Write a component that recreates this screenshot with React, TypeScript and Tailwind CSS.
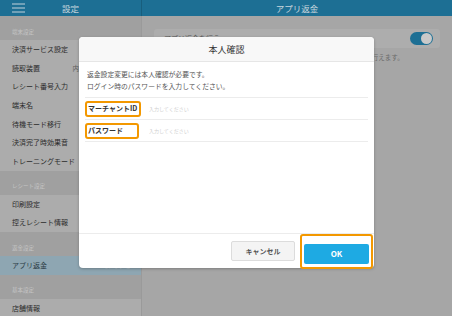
import { useState } from "react";

type Row = { label: string; value?: string; active?: boolean };
type Section = { title: string; rows: Row[] };

const sections: Section[] = [
  {
    title: "端末設定",
    rows: [
      { label: "決済サービス設定" },
      { label: "読取装置", value: "内蔵カードリーダー" },
      { label: "レシート番号入力" },
      { label: "端末名" },
      { label: "待機モード移行" },
      { label: "決済完了時効果音" },
      { label: "トレーニングモード" },
    ],
  },
  {
    title: "レシート設定",
    rows: [{ label: "印刷設定" }, { label: "控えレシート情報" }],
  },
  {
    title: "返金設定",
    rows: [{ label: "アプリ返金", value: "許可する", active: true }],
  },
  {
    title: "基本設定",
    rows: [{ label: "店舗情報" }],
  },
];

function Sidebar() {
  return (
    <div className="w-[142px] shrink-0 border-r border-[#9a9a9a] bg-[#acacac]">
      {sections.map((s) => (
        <div key={s.title}>
          <div className="h-[24px] flex items-end pl-[12px] pb-[5px] bg-[#a0a0a0] text-[5.5px] leading-none text-[#c4c4c4]">
            {s.title}
          </div>
          {s.rows.map((r) => (
            <div
              key={r.label}
              className={
                "h-[18.7px] flex items-center pl-[12px] pr-[10px] text-[7px] leading-none " +
                (r.active ? "bg-[#8ea6b2] text-[#2a3a42]" : "text-[#2b2b2b]")
              }
            >
              <span>{r.label}</span>
              {r.value && (
                <span
                  className={
                    "ml-auto text-[6.5px] " +
                    (r.active ? "text-[#aab9c0]" : "text-[#5c5c5c]")
                  }
                >
                  {r.value}
                </span>
              )}
            </div>
          ))}
        </div>
      ))}
    </div>
  );
}

function Dialog() {
  const [merchant, setMerchant] = useState("");
  const [password, setPassword] = useState("");

  return (
    <div className="absolute left-[79px] top-[37px] w-[295px] h-[231px] bg-white rounded-[4px] shadow-[0_1px_3px_rgba(0,0,0,0.25)] flex flex-col overflow-visible">
      <div className="h-[25px] shrink-0 flex items-center justify-center rounded-t-[4px] bg-[#f8f8f8] border-b border-[#e6e6e6] text-[9px] text-[#333] leading-none">
        本人確認
      </div>
      <div className="px-[8px] pt-[6px] text-[6.8px] leading-[12px] text-[#555]">
        <p>返金設定変更には本人確認が必要です。</p>
        <p>ログイン時のパスワードを入力してください。</p>
      </div>
      <div className="mx-[6px] mt-[5px] border-t border-[#ececec]">
        <div className="h-[22px] flex items-center border-b border-[#ececec]">
          <div className="w-[56px] h-[16px] flex items-center pl-[1px] border-2 border-[#f39800] rounded-[3px] text-[7px] font-bold text-[#333] leading-none whitespace-nowrap">
            マーチャントID
          </div>
          <input
            value={merchant}
            onChange={(e) => setMerchant(e.target.value)}
            placeholder="入力してください"
            className="ml-[8px] flex-1 bg-transparent outline-none text-[5px] text-[#333] placeholder:text-[#cfcfcf]"
          />
        </div>
        <div className="h-[22px] flex items-center border-b border-[#ececec]">
          <div className="w-[54px] h-[16px] flex items-center pl-[1px] border-2 border-[#f39800] rounded-[3px] text-[7px] font-bold text-[#333] leading-none whitespace-nowrap">
            パスワード
          </div>
          <input
            type="password"
            value={password}
            onChange={(e) => setPassword(e.target.value)}
            placeholder="入力してください"
            className="ml-[10px] flex-1 bg-transparent outline-none text-[5px] text-[#333] placeholder:text-[#cfcfcf]"
          />
        </div>
      </div>
      <div className="flex-1" />
      <div className="h-[35px] shrink-0 border-t border-[#ececec] flex items-center justify-end pr-[1px] gap-[5px]">
        <button className="w-[64px] h-[20px] rounded-[2px] bg-[#f4f4f4] border border-[#dcdcdc] text-[7px] font-bold text-[#555] leading-none">
          キャンセル
        </button>
        <div className="border-2 border-[#f39800] rounded-[3px] p-[2px] pb-[3px]">
          <button className="w-[65px] h-[20px] rounded-[2px] bg-[#1eaae3] text-[8px] font-bold text-white leading-none">
            OK
          </button>
        </div>
      </div>
    </div>
  );
}

export default function App() {
  return (
    <div className="relative w-[452px] h-[316px] overflow-hidden bg-[#a6a6a6] font-['Noto_Sans_CJK_JP','Liberation_Sans',sans-serif]">
      <div className="h-[16px] flex bg-[#1d6f94]">
        <div className="w-[142px] shrink-0 relative flex items-center justify-center border-r border-[#185e7d]">
          <svg
            className="absolute left-[12px] top-[3px]"
            width="13"
            height="10"
            viewBox="0 0 13 10"
          >
            <path d="M0 1h13M0 5h13M0 9h13" stroke="#c3d3db" strokeWidth="1" />
          </svg>
          <span className="text-[8.5px] text-[#c8d6dd] leading-none">設定</span>
        </div>
        <div className="flex-1 flex items-center justify-center text-[8.5px] text-[#c8d6dd] leading-none">
          アプリ返金
        </div>
      </div>
      <div className="flex h-[300px]">
        <Sidebar />
        <div className="flex-1 pt-[13px] px-[12px]">
          <div className="h-[19px] rounded-[3px] bg-[#adadad] flex items-center justify-between pl-[10px] pr-[7px]">
            <span className="text-[7px] text-[#555] leading-none">アプリ返金を行う</span>
            <div className="w-[23px] h-[13px] rounded-full bg-[#1d6f94] flex items-center justify-end pr-[1px]">
              <div className="w-[11px] h-[11px] rounded-full bg-[#c9c9c9]" />
            </div>
          </div>
          <p className="mt-[5px] pl-[10px] text-[6.5px] leading-[8px] text-[#6a6a6a] whitespace-nowrap">
            この設定をオンにすると、決済アプリ上から取引の返金処理をいつでも行えます。
          </p>
        </div>
      </div>
      <Dialog />
    </div>
  );
}
